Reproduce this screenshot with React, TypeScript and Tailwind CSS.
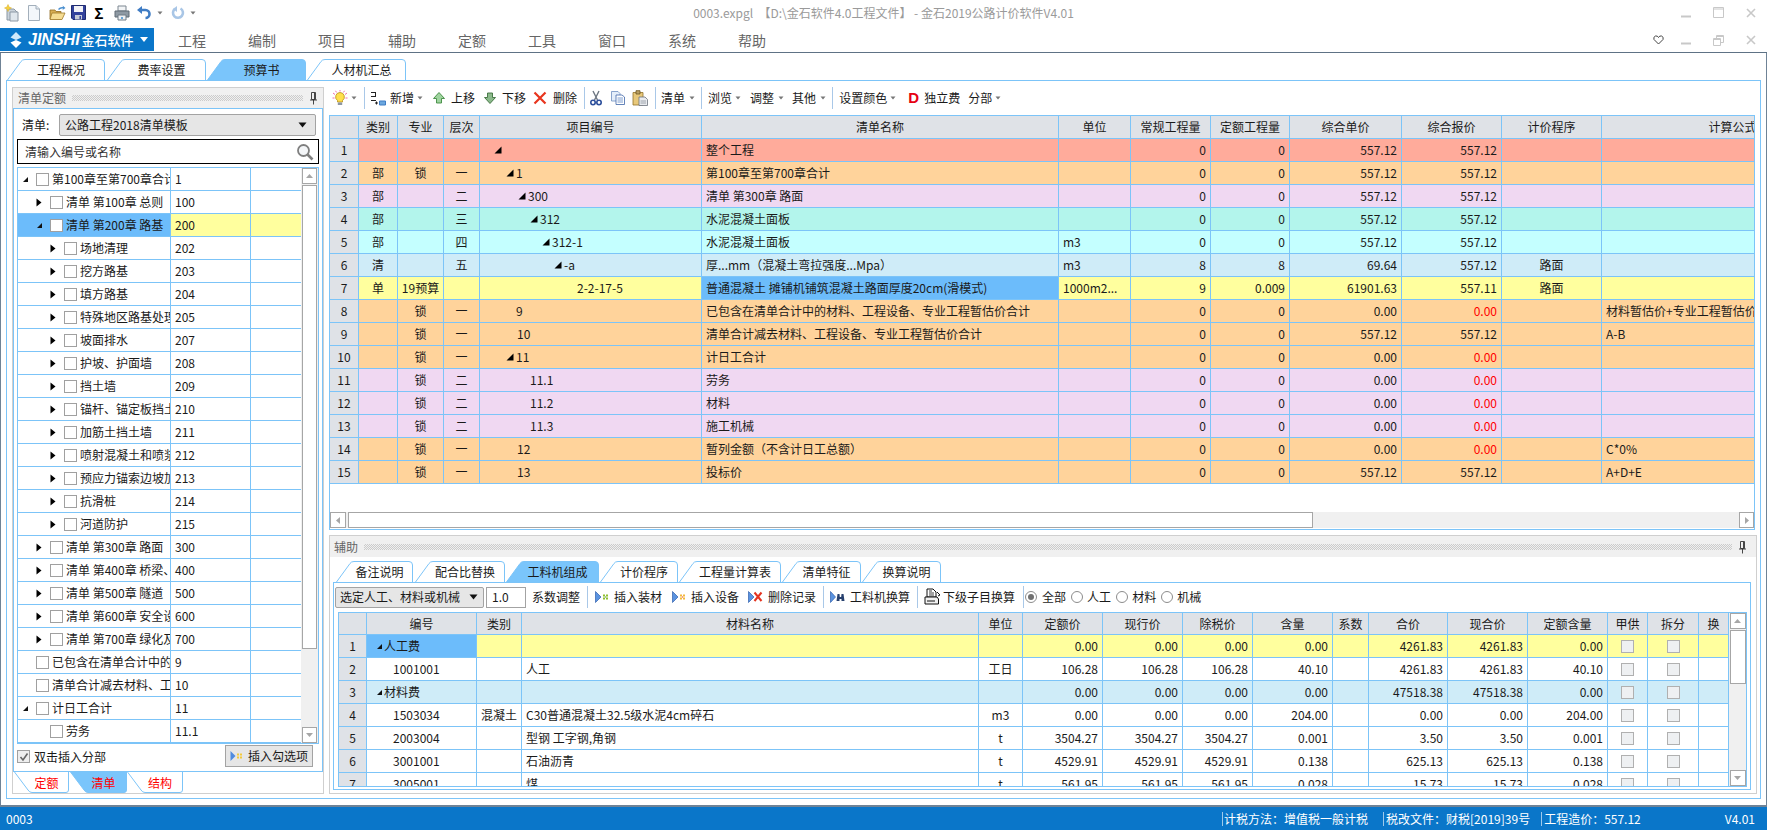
import React from "react";

const LINE = "border-[#7cc4f8]";
const mainCols = "grid grid-cols-[29px_39px_46px_36px_222px_357px_72px_80px_79px_112px_100px_100px_262px] w-[1534px]";
const subCols = "grid grid-cols-[28px_110px_45px_457px_44px_80px_80px_70px_80px_36px_79px_80px_80px_40px_51px_30px] w-[1390px]";
const treeCols = "grid grid-cols-[153px_80px_50px] w-[283px]";

const BG = {
  red: "bg-[#ffab9b]",
  orange: "bg-[#ffd39b]",
  purple: "bg-[#f0d8f2]",
  teal: "bg-[#b3f5ec]",
  cyan: "bg-[#c4ffff]",
  blue: "bg-[#cfecf8]",
  yellow: "bg-[#ffff9e]",
  white: "bg-white",
};

function Cell({ children, align = "c", className = "" }: { children?: React.ReactNode; align?: "c" | "l" | "r"; className?: string }) {
  const a = align === "c" ? "justify-center" : align === "r" ? "justify-end pr-1" : "justify-start pl-1";
  return <div className={`flex items-center overflow-hidden whitespace-nowrap border-r ${LINE} min-w-0 ${a} ${className}`}>{children}</div>;
}

function ExpTri({ className = "" }: { className?: string }) {
  return (
    <svg width="8" height="8" viewBox="0 0 8 8" className={`shrink-0 ${className}`}>
      <path d="M7.5 0.5V7.5H0.5Z" fill="#000" />
    </svg>
  );
}
function SmallTri() {
  return (
    <svg width="8" height="8" viewBox="0 0 8 8" className="shrink-0">
      <path d="M7 2V7H2Z" fill="#111" />
    </svg>
  );
}
function ColTri() {
  return (
    <svg width="8" height="9" viewBox="0 0 8 9" className="shrink-0">
      <path d="M1.5 0.5L6.5 4.5L1.5 8.5Z" fill="#000" />
    </svg>
  );
}
function Dd() {
  return (
    <svg width="6" height="4" viewBox="0 0 6 4" className="shrink-0">
      <path d="M0.5 0.5H5.5L3 3.5Z" fill="#777" />
    </svg>
  );
}
function Sep({ className = "" }: { className?: string }) {
  return <div className={`w-px h-[22px] bg-[#a9c8e8] shrink-0 ${className}`} />;
}
function Caret({ className = "" }: { className?: string }) {
  return (
    <svg width="9" height="6" viewBox="0 0 9 6" className={`shrink-0 ${className}`}>
      <path d="M0.5 0.5H8.5L4.5 5.5Z" fill="#111" />
    </svg>
  );
}

function Tab({ w, label, active, className, h = 21 }: { w: number; label: string; active?: boolean; className: string; h?: number }) {
  return (
    <div className={`relative shrink-0 flex items-center justify-center pl-[10px] ${className}`}>
      <svg width={w} height={h} viewBox={`0 0 ${w} ${h}`} className="absolute left-0 top-0">
        <path
          d={`M0.5 ${h} L14 2.5 Q15.2 0.5 18 0.5 L${w - 4} 0.5 Q${w - 0.5} 0.5 ${w - 0.5} 4 L${w - 0.5} ${h}`}
          fill={active ? "#7ac5fb" : "#fff"}
          stroke="#7cc4f8"
        />
      </svg>
      <span className="relative text-[12px] leading-[20px] text-[#1a1a1a]">{label}</span>
    </div>
  );
}

function BottomTab({ w, label, active, className }: { w: number; label: string; active?: boolean; className: string }) {
  const h = 21;
  return (
    <div className={`relative shrink-0 flex items-center justify-center ${className}`}>
      <svg width={w} height={h} viewBox={`0 0 ${w} ${h}`} className="absolute left-0 top-0">
        <path
          d={`M0.5 0 L14 ${h - 3} Q15.5 ${h - 0.5} 18 ${h - 0.5} L${w - 3} ${h - 0.5} Q${w - 0.5} ${h - 0.5} ${w - 0.5} ${h - 3} L${w - 0.5} 0`}
          fill={active ? "#7ac5fb" : "#fff"}
          stroke="#7cc4f8"
        />
      </svg>
      <span className="relative text-[12px] leading-[20px] text-[#ff0000] pl-[10px]">{label}</span>
    </div>
  );
}

function Pin() {
  return (
    <svg width="9" height="14" viewBox="0 0 9 14" className="shrink-0">
      <path d="M2.5 1.5H6.5V8.5H2.5Z M1 9H8 M4.5 9V13.5 M5.5 2V8" fill="none" stroke="#333" strokeWidth="0.9" />
    </svg>
  );
}
function DotBand() {
  return <div className="flex-1 h-[6px] bg-[repeating-conic-gradient(#cbcbcb_0_25%,transparent_0_50%)] bg-[length:2px_2px]" />;
}

function Box({ className = "" }: { className?: string }) {
  return <div className={`w-[13px] h-[13px] border border-[#a0a0a0] bg-white shrink-0 ${className}`} />;
}

function ScrollBtn({ dir, className = "" }: { dir: "up" | "down" | "left" | "right"; className?: string }) {
  const d = { up: "M4.5 2L8 6H1Z", down: "M1 2H8L4.5 6Z", left: "M6 1V8L2 4.5Z", right: "M3 1V8L7 4.5Z" }[dir];
  return (
    <div className={`flex items-center justify-center bg-white border border-[#a6a6a6] shrink-0 ${className}`}>
      <svg width="9" height="9" viewBox="0 0 9 9">
        <path d={d} fill="#a6a6a6" />
      </svg>
    </div>
  );
}

/* ----- icons ----- */
function IconNewStar() {
  return (
    <svg width="16" height="18" viewBox="0 0 16 18" className="shrink-0">
      <path d="M3 5H10L13 8V16H3Z" fill="#c9d2da" stroke="#8c98a4" />
      <path d="M6 8H14V17H6Z" fill="#dfe6ec" stroke="#8c98a4" />
      <path d="M4 0.5L5 3L7.5 4L5 5L4 7.5L3 5L0.5 4L3 3Z" fill="#f7d23c" stroke="#d9a81a" strokeWidth="0.5" />
    </svg>
  );
}
function IconDoc() {
  return (
    <svg width="16" height="18" viewBox="0 0 16 18" className="shrink-0">
      <path d="M2.5 1.5H10L13.5 5V16.5H2.5Z" fill="#f3f7fb" stroke="#a3afbb" />
      <path d="M10 1.5V5H13.5" fill="#dfe6ee" stroke="#a3afbb" />
    </svg>
  );
}
function IconFolder() {
  return (
    <svg width="17" height="16" viewBox="0 0 17 16" className="shrink-0">
      <path d="M1 5H6L7 6.5H12V14H1Z" fill="#d8ad52" stroke="#8f6b22" strokeWidth="0.8" />
      <path d="M3 8H16L13 14.5H1Z" fill="#f5dc92" stroke="#a07a2a" strokeWidth="0.8" />
      <path d="M9 4Q11 1.5 14 2L13.5 0.5L16.5 3L13.5 5L14 3.5Q11.5 3 10 5Z" fill="#4a8fcf" />
    </svg>
  );
}
function IconSave() {
  return (
    <svg width="15" height="15" viewBox="0 0 15 15" className="shrink-0">
      <path d="M0.5 0.5H14.5V14.5H2L0.5 13Z" fill="#33429c" stroke="#1e2a70" />
      <path d="M3 1H12V7H3Z" fill="#f2f2f6" />
      <path d="M4 10H11V14.5H4Z" fill="#c8ccd6" />
      <path d="M8.5 11H10V14H8.5Z" fill="#33429c" />
    </svg>
  );
}
function IconPrinter() {
  return (
    <svg width="16" height="16" viewBox="0 0 16 16" className="shrink-0">
      <path d="M4 1H12V6H4Z" fill="#f2f4f6" stroke="#7d8791" />
      <path d="M1 6H15V12H1Z" fill="#8e99a3" stroke="#5f6a74" />
      <path d="M4 10H12V15H4Z" fill="#eef1f4" stroke="#6f7a84" />
      <path d="M7 12H9V14H7Z" fill="#6aa7d8" />
    </svg>
  );
}
function IconUndo({ light }: { light?: boolean }) {
  const c = light ? "#a9c6e6" : "#3f7cc4";
  return light ? (
    <svg width="16" height="16" viewBox="0 0 16 16" className="shrink-0">
      <path d="M10.5 3.5A5 5 0 1 1 5 3.8" fill="none" stroke={c} strokeWidth="2.6" />
      <path d="M7 1V7L3 4Z" fill={c} />
    </svg>
  ) : (
    <svg width="16" height="16" viewBox="0 0 16 16" className="shrink-0">
      <path d="M4 5H9.5A4 4 0 0 1 9.5 13" fill="none" stroke={c} strokeWidth="2.6" />
      <path d="M6 1V9L1 5Z" fill={c} />
    </svg>
  );
}
function IconBulb() {
  return (
    <svg width="16" height="17" viewBox="0 0 16 17" className="shrink-0">
      <path d="M1 3L3 4.5M15 3L13 4.5M0.5 8H2.5M15.5 8H13.5M8 0V1.5M3.5 0.8L4.5 2.4M12.5 0.8L11.5 2.4" stroke="#f06bb0" strokeWidth="1" />
      <path d="M8 2.5A4.4 4.4 0 0 1 10.5 10.5V12H5.5V10.5A4.4 4.4 0 0 1 8 2.5Z" fill="#ffe04d" stroke="#b88d1c" strokeWidth="0.8" />
      <path d="M5.8 12.5H10.2V15H5.8Z" fill="#8d97a3" />
    </svg>
  );
}
function IconNew() {
  return (
    <svg width="16" height="16" viewBox="0 0 16 16" className="shrink-0">
      <path d="M1 2.5H6M5.5 2.5V6.5M1 6.5H6M1 10.5H6" stroke="#222" fill="none" />
      <path d="M5 13H8M6.5 11.5V14.5" stroke="#222" />
      <path d="M9.5 11H15.5V15H9.5Z" fill="#6ba7de" stroke="#3f7cc4" />
    </svg>
  );
}
function IconUp({ dark }: { dark?: boolean }) {
  return (
    <svg width="12" height="12" viewBox="0 0 12 12" className="shrink-0">
      {dark ? (
        <path d="M3.5 1H8.5V5.5H11.5L6 11.5L0.5 5.5H3.5Z" fill="#8bb98b" stroke="#3c6f3c" strokeWidth="0.9" />
      ) : (
        <path d="M6 0.5L11.5 6.5H8.5V11H3.5V6.5H0.5Z" fill="#9fd49f" stroke="#3f8a3f" strokeWidth="0.9" />
      )}
    </svg>
  );
}
function IconX() {
  return (
    <svg width="14" height="14" viewBox="0 0 14 14" className="shrink-0">
      <path d="M1.5 1.5L12.5 12.5M12.5 1.5L1.5 12.5" stroke="#e8351e" strokeWidth="2.2" />
    </svg>
  );
}
function IconScissors() {
  return (
    <svg width="14" height="16" viewBox="0 0 14 16" className="shrink-0">
      <path d="M4 1L8.5 10M10 1L5.5 10" stroke="#6d7682" strokeWidth="1.4" />
      <circle cx="4" cy="12.5" r="2.2" fill="none" stroke="#2d4f9c" strokeWidth="1.6" />
      <circle cx="10" cy="12.5" r="2.2" fill="none" stroke="#2d4f9c" strokeWidth="1.6" />
    </svg>
  );
}
function IconCopy() {
  return (
    <svg width="14" height="14" viewBox="0 0 14 14" className="shrink-0">
      <path d="M0.5 0.5H7L9 2.5V10H0.5Z" fill="#e4eefa" stroke="#6f8fc0" strokeWidth="0.8" />
      <path d="M5 4H11L13.5 6V13.5H5Z" fill="#fff" stroke="#3f66a8" strokeWidth="0.8" />
      <path d="M6.5 7H12M6.5 9H12M6.5 11H12" stroke="#5d86c4" strokeWidth="0.8" />
    </svg>
  );
}
function IconPaste() {
  return (
    <svg width="16" height="16" viewBox="0 0 16 16" className="shrink-0">
      <path d="M1 2.5H11V15H1Z" fill="#e8c87a" stroke="#93722a" strokeWidth="0.8" />
      <path d="M4 0.7H8V4H4Z" fill="#bba267" stroke="#6b5420" strokeWidth="0.8" />
      <path d="M7 7H13L15.5 9.5V15.5H7Z" fill="#e9ebef" stroke="#6b727c" strokeWidth="0.8" />
      <path d="M8.5 11H14M8.5 13H14" stroke="#8a929c" strokeWidth="0.8" />
    </svg>
  );
}
function IconInsert({ c1, c2 }: { c1: string; c2: string }) {
  return (
    <svg width="14" height="14" viewBox="0 0 14 14" className="shrink-0">
      <path d="M0.5 1.5L6 7L0.5 12.5Z" fill="#5a93e0" stroke="#2f5fae" strokeWidth="0.7" />
      <path d="M8 4.5H10V6.5H8ZM11 4.5H13V6.5H11ZM8 7.5H10V9.5H8ZM11 7.5H13V9.5H11Z" fill={c1} />
      <path d="M10 6.5H11V7.5H10Z" fill={c2} />
    </svg>
  );
}
function IconDel() {
  return (
    <svg width="15" height="14" viewBox="0 0 15 14" className="shrink-0">
      <path d="M0.5 1.5L6 7L0.5 12.5Z" fill="#5a93e0" stroke="#2f5fae" strokeWidth="0.7" />
      <path d="M6.5 2.5L13.5 11M13.5 2.5L6.5 11" stroke="#e5331f" strokeWidth="2" />
    </svg>
  );
}
function IconBinoc() {
  return (
    <svg width="15" height="14" viewBox="0 0 15 14" className="shrink-0">
      <path d="M0.5 1.5L5.5 7L0.5 12.5Z" fill="#5a93e0" stroke="#2f5fae" strokeWidth="0.7" />
      <path d="M7.5 4H9.5L9.8 7H11.2L11.5 4H13.5L14.5 11H11.5V9H9.5V11H6.5Z" fill="#27406e" />
    </svg>
  );
}
function IconSub() {
  return (
    <svg width="17" height="18" viewBox="0 0 17 18" className="shrink-0">
      <path d="M3 1H9L12 4V9H3Z" fill="#fff" stroke="#111" />
      <path d="M5 3H8M5 5H10M5 7H10" stroke="#111" strokeWidth="0.8" />
      <path d="M1 9H13L14.5 11V16H1Z" fill="#f1f1f1" stroke="#111" />
      <path d="M3 13H11" stroke="#111" />
      <path d="M13 4L16 7L14 8" fill="none" stroke="#111" />
    </svg>
  );
}
function Radio({ on, className = "" }: { on?: boolean; className?: string }) {
  return (
    <div className={`w-[12px] h-[12px] rounded-full border border-[#8c8c8c] bg-white flex items-center justify-center shrink-0 ${className}`}>
      {on && <div className="w-[6px] h-[6px] rounded-full bg-[#707070]" />}
    </div>
  );
}
function WinBtns({ restore }: { restore?: boolean }) {
  return (
    <>
      <svg width="10" height="10" viewBox="0 0 10 10" className="shrink-0">
        <path d="M0 8.5H10" stroke="#c8c8c8" strokeWidth="2" />
      </svg>
      <svg width="11" height="11" viewBox="0 0 11 11" className="shrink-0 ml-[22px]">
        {restore ? (
          <path d="M0.5 3.5H7.5V10.5H0.5Z M3.5 3.5V0.5H10.5V7.5H7.5 M0.5 4.5H7.5 M3.5 1.5H10.5" fill="none" stroke="#c8c8c8" />
        ) : (
          <path d="M0.5 0.5H10.5V10.5H0.5Z M0.5 2H10.5" fill="none" stroke="#c8c8c8" strokeWidth="1" />
        )}
      </svg>
      <svg width="10" height="10" viewBox="0 0 10 10" className="shrink-0 ml-[22px]">
        <path d="M1 1L9 9M9 1L1 9" stroke="#c8c8c8" strokeWidth="1.6" />
      </svg>
    </>
  );
}

/* ----- data ----- */
type MainRow = {
  bg: string;
  t?: string;
  m?: string;
  l?: string;
  pad: string;
  tri?: boolean;
  code?: string;
  name: string;
  sel?: boolean;
  unit?: string;
  q1: string;
  q2: string;
  up: string;
  total: string;
  red?: boolean;
  prog?: string;
  formula?: string;
};

const mainRows: MainRow[] = [
  { bg: BG.red, pad: "!pl-[14px]", tri: true, name: "整个工程", q1: "0", q2: "0", up: "557.12", total: "557.12" },
  { bg: BG.orange, t: "部", m: "锁", l: "一", pad: "!pl-[26px]", tri: true, code: "1", name: "第100章至第700章合计", q1: "0", q2: "0", up: "557.12", total: "557.12" },
  { bg: BG.purple, t: "部", l: "二", pad: "!pl-[38px]", tri: true, code: "300", name: "清单 第300章 路面", q1: "0", q2: "0", up: "557.12", total: "557.12" },
  { bg: BG.teal, t: "部", l: "三", pad: "!pl-[50px]", tri: true, code: "312", name: "水泥混凝土面板", q1: "0", q2: "0", up: "557.12", total: "557.12" },
  { bg: BG.cyan, t: "部", l: "四", pad: "!pl-[62px]", tri: true, code: "312-1", name: "水泥混凝土面板", unit: "m3", q1: "0", q2: "0", up: "557.12", total: "557.12" },
  { bg: BG.blue, t: "清", l: "五", pad: "!pl-[74px]", tri: true, code: "-a", name: "厚...mm（混凝土弯拉强度...Mpa）", unit: "m3", q1: "8", q2: "8", up: "69.64", total: "557.12", prog: "路面" },
  { bg: BG.yellow, t: "单", m: "19预算", pad: "!pl-[97px]", code: "2-2-17-5", name: "普通混凝土 摊铺机铺筑混凝土路面厚度20cm(滑模式)", sel: true, unit: "1000m2...", q1: "9", q2: "0.009", up: "61901.63", total: "557.11", prog: "路面" },
  { bg: BG.orange, m: "锁", l: "一", pad: "!pl-[36px]", code: "9", name: "已包含在清单合计中的材料、工程设备、专业工程暂估价合计", q1: "0", q2: "0", up: "0.00", total: "0.00", red: true, formula: "材料暂估价+专业工程暂估价合计" },
  { bg: BG.orange, m: "锁", l: "一", pad: "!pl-[37px]", code: "10", name: "清单合计减去材料、工程设备、专业工程暂估价合计", q1: "0", q2: "0", up: "557.12", total: "557.12", formula: "A-B" },
  { bg: BG.orange, m: "锁", l: "一", pad: "!pl-[26px]", tri: true, code: "11", name: "计日工合计", q1: "0", q2: "0", up: "0.00", total: "0.00", red: true },
  { bg: BG.purple, m: "锁", l: "二", pad: "!pl-[50px]", code: "11.1", name: "劳务", q1: "0", q2: "0", up: "0.00", total: "0.00", red: true },
  { bg: BG.purple, m: "锁", l: "二", pad: "!pl-[50px]", code: "11.2", name: "材料", q1: "0", q2: "0", up: "0.00", total: "0.00", red: true },
  { bg: BG.purple, m: "锁", l: "二", pad: "!pl-[50px]", code: "11.3", name: "施工机械", q1: "0", q2: "0", up: "0.00", total: "0.00", red: true },
  { bg: BG.orange, m: "锁", l: "一", pad: "!pl-[37px]", code: "12", name: "暂列金额（不含计日工总额）", q1: "0", q2: "0", up: "0.00", total: "0.00", red: true, formula: "C*0%" },
  { bg: BG.orange, m: "锁", l: "一", pad: "!pl-[37px]", code: "13", name: "投标价", q1: "0", q2: "0", up: "557.12", total: "557.12", formula: "A+D+E" },
];

const mainHead = ["", "类别", "专业", "层次", "项目编号", "清单名称", "单位", "常规工程量", "定额工程量", "综合单价", "综合报价", "计价程序", "计算公式"];
const subHead = ["", "编号", "类别", "材料名称", "单位", "定额价", "现行价", "除税价", "含量", "系数", "合价", "现合价", "定额含量", "甲供", "拆分", "换"];

type SubRow = { bg: string; group?: boolean; code: string; kind?: string; name?: string; unit?: string; v: string[] };
const subRows: SubRow[] = [
  { bg: BG.yellow, group: true, code: "人工费", v: ["0.00", "0.00", "0.00", "0.00", "4261.83", "4261.83", "0.00"] },
  { bg: BG.white, code: "1001001", name: "人工", unit: "工日", v: ["106.28", "106.28", "106.28", "40.10", "4261.83", "4261.83", "40.10"] },
  { bg: BG.blue, group: true, code: "材料费", v: ["0.00", "0.00", "0.00", "0.00", "47518.38", "47518.38", "0.00"] },
  { bg: BG.white, code: "1503034", kind: "混凝土", name: "C30普通混凝土32.5级水泥4cm碎石", unit: "m3", v: ["0.00", "0.00", "0.00", "204.00", "0.00", "0.00", "204.00"] },
  { bg: BG.white, code: "2003004", name: "型钢 工字钢,角钢", unit: "t", v: ["3504.27", "3504.27", "3504.27", "0.001", "3.50", "3.50", "0.001"] },
  { bg: BG.white, code: "3001001", name: "石油沥青", unit: "t", v: ["4529.91", "4529.91", "4529.91", "0.138", "625.13", "625.13", "0.138"] },
  { bg: BG.white, code: "3005001", name: "煤", unit: "t", v: ["561.95", "561.95", "561.95", "0.028", "15.73", "15.73", "0.028"] },
];

type TreeRow = { lv: 0 | 1 | 2; arrow?: "exp" | "col"; name: string; code: string; sel?: boolean };
const treeRows: TreeRow[] = [
  { lv: 0, arrow: "exp", name: "第100章至第700章合计", code: "1" },
  { lv: 1, arrow: "col", name: "清单 第100章 总则", code: "100" },
  { lv: 1, arrow: "exp", name: "清单 第200章 路基", code: "200", sel: true },
  { lv: 2, arrow: "col", name: "场地清理", code: "202" },
  { lv: 2, arrow: "col", name: "挖方路基", code: "203" },
  { lv: 2, arrow: "col", name: "填方路基", code: "204" },
  { lv: 2, arrow: "col", name: "特殊地区路基处理", code: "205" },
  { lv: 2, arrow: "col", name: "坡面排水", code: "207" },
  { lv: 2, arrow: "col", name: "护坡、护面墙", code: "208" },
  { lv: 2, arrow: "col", name: "挡土墙", code: "209" },
  { lv: 2, arrow: "col", name: "锚杆、锚定板挡土墙", code: "210" },
  { lv: 2, arrow: "col", name: "加筋土挡土墙", code: "211" },
  { lv: 2, arrow: "col", name: "喷射混凝土和喷浆", code: "212" },
  { lv: 2, arrow: "col", name: "预应力锚索边坡加固", code: "213" },
  { lv: 2, arrow: "col", name: "抗滑桩", code: "214" },
  { lv: 2, arrow: "col", name: "河道防护", code: "215" },
  { lv: 1, arrow: "col", name: "清单 第300章 路面", code: "300" },
  { lv: 1, arrow: "col", name: "清单 第400章 桥梁、涵洞", code: "400" },
  { lv: 1, arrow: "col", name: "清单 第500章 隧道", code: "500" },
  { lv: 1, arrow: "col", name: "清单 第600章 安全设施", code: "600" },
  { lv: 1, arrow: "col", name: "清单 第700章 绿化及环境", code: "700" },
  { lv: 0, name: "已包含在清单合计中的材料", code: "9" },
  { lv: 0, name: "清单合计减去材料、工程设备", code: "10" },
  { lv: 0, arrow: "exp", name: "计日工合计", code: "11" },
  { lv: 1, name: "劳务", code: "11.1" },
];
const treePad = ["pl-[3px]", "pl-[17px]", "pl-[31px]"];

function LeftPanel() {
  return (
    <div className="w-[312px] h-[707px] border border-[#cfcfcf] shrink-0 flex flex-col">
      <div className="h-[20px] bg-[#f0f0f0] flex items-center pl-[5px] pr-[5px] gap-[6px] text-[12px] text-[#666]">
        <span className="leading-[20px]">清单定额</span>
        <DotBand />
        <Pin />
      </div>
      <div className={`h-[664px] border ${LINE} flex flex-col`}>
        <div className="flex items-center h-[22px] mt-[5px] pl-[8px]">
          <span className="w-[37px] text-[12px] leading-[20px]">清单:</span>
          <div className="w-[257px] h-[22px] border border-[#a3a3a3] rounded-[2px] bg-[#e6e6e6] flex items-center pl-[5px] pr-[8px] justify-between">
            <span className="text-[12px] leading-[20px]">公路工程2018清单模板</span>
            <Caret />
          </div>
        </div>
        <div className="ml-[3px] mt-[3px] w-[302px] h-[25px] border border-black flex items-center pl-[7px] pr-[4px] justify-between">
          <span className="text-[12px] leading-[20px] text-[#333]">清输入编号或名称</span>
          <svg width="18" height="18" viewBox="0 0 18 18" className="shrink-0">
            <circle cx="7.5" cy="7.5" r="5.5" fill="#f4f6f8" stroke="#7f7f7f" strokeWidth="1.8" />
            <path d="M11.5 11.5L16.5 16.5" stroke="#7f7f7f" strokeWidth="2.6" />
          </svg>
        </div>
        <div className={`ml-[3px] mt-[3px] w-[302px] h-[577px] border ${LINE} flex overflow-hidden`}>
          <div className="w-[283px] shrink-0">
            {treeRows.map((r) => (
              <div key={r.code} className={`${treeCols} h-[23px] border-b ${LINE} text-[12px] leading-[20px]`}>
                <div className={`flex items-center overflow-hidden whitespace-nowrap border-r ${LINE} ${treePad[r.lv]} ${r.sel ? "bg-[#6cbcfb]" : ""}`}>
                  <div className="w-[8px] flex justify-center shrink-0">{r.arrow === "exp" ? <SmallTri /> : r.arrow === "col" ? <ColTri /> : null}</div>
                  <Box className="ml-[7px]" />
                  <span className="ml-[3px]">{r.name}</span>
                </div>
                <div className={`flex items-center pl-[4px] border-r ${LINE} ${r.sel ? "bg-[#ffff9e]" : ""}`}>{r.code}</div>
                <div className={r.sel ? "bg-[#ffff9e]" : ""} />
              </div>
            ))}
          </div>
          <div className="w-[17px] bg-[#f0f0f0] flex flex-col items-center shrink-0">
            <ScrollBtn dir="up" className="w-[15px] h-[16px]" />
            <div className="w-[15px] h-[464px] mt-px bg-white border border-[#a6a6a6]" />
            <div className="flex-1" />
            <ScrollBtn dir="down" className="w-[15px] h-[16px]" />
          </div>
        </div>
        <div className="flex-1 flex items-start pl-[3px] pt-[1px]">
          <div className="mt-[5px] w-[13px] h-[13px] border border-[#a0a0a0] bg-[#eeeeee] flex items-center justify-center shrink-0">
            <svg width="10" height="10" viewBox="0 0 10 10">
              <path d="M1.5 5L4 8L8.5 1.5" fill="none" stroke="#666" strokeWidth="1.6" />
            </svg>
          </div>
          <span className="ml-[4px] mt-[2px] text-[12px] leading-[20px]">双击插入分部</span>
          <div className="ml-[119px] w-[88px] h-[22px] border border-[#a3a3a3] bg-[#e6e6e6] flex items-center pl-[4px]">
            <svg width="14" height="12" viewBox="0 0 14 12" className="shrink-0">
              <path d="M0.5 1L5.5 6L0.5 11Z" fill="#4f8be0" />
              <path d="M7 3.5H9V5.5H7ZM10 3.5H12V5.5H10ZM7 6.5H9V8.5H7ZM10 6.5H12V8.5H10Z" fill="#f3c93a" />
            </svg>
            <span className="ml-[4px] text-[12px] leading-[20px]">插入勾选项</span>
          </div>
        </div>
      </div>
      <div className="h-[21px] flex pl-px">
        <BottomTab w={55} label="定额" className="w-[55px]" />
        <BottomTab w={57} label="清单" active className="w-[57px] ml-px" />
        <BottomTab w={56} label="结构" className="w-[56px]" />
      </div>
    </div>
  );
}

function MainToolbar() {
  const T = ({ c, children }: { c: string; children: React.ReactNode }) => (
    <span className={`shrink-0 whitespace-nowrap text-[12px] leading-[20px] text-[#1a1a1a] ${c}`}>{children}</span>
  );
  return (
    <div className="h-[22px] mb-[6px] flex items-center">
      <div className="ml-[3px]"><IconBulb /></div>
      <div className="ml-[3px]"><Dd /></div>
      <Sep className="ml-[7px]" />
      <div className="ml-[5px]"><IconNew /></div>
      <T c="ml-[4px]">新增</T>
      <div className="ml-[3px]"><Dd /></div>
      <div className="ml-[10px]"><IconUp /></div>
      <T c="ml-[6px]">上移</T>
      <div className="ml-[9px]"><IconUp dark /></div>
      <T c="ml-[6px]">下移</T>
      <div className="ml-[7px]"><IconX /></div>
      <T c="ml-[6px]">删除</T>
      <Sep className="ml-[7px]" />
      <div className="ml-[4px]"><IconScissors /></div>
      <div className="ml-[8px]"><IconCopy /></div>
      <div className="ml-[7px]"><IconPaste /></div>
      <Sep className="ml-[7px]" />
      <T c="ml-[5px]">清单</T>
      <div className="ml-[4px]"><Dd /></div>
      <Sep className="ml-[6px]" />
      <T c="ml-[6px]">浏览</T>
      <div className="ml-[3px]"><Dd /></div>
      <T c="ml-[9px]">调整</T>
      <div className="ml-[4px]"><Dd /></div>
      <T c="ml-[8px]">其他</T>
      <div className="ml-[4px]"><Dd /></div>
      <Sep className="ml-[6px]" />
      <T c="ml-[6px]">设置颜色</T>
      <div className="ml-[3px]"><Dd /></div>
      <span className="ml-[12px] w-[10px] text-[15px] font-bold leading-[20px] text-[#e60012] font-['Liberation_Sans',sans-serif]">D</span>
      <T c="ml-[6px]">独立费</T>
      <T c="ml-[8px]">分部</T>
      <div className="ml-[3px]"><Dd /></div>
    </div>
  );
}

function MainGrid() {
  return (
    <div className={`w-[1426px] h-[415px] border ${LINE} flex flex-col`}>
      <div className="flex-1 overflow-hidden text-[12px] leading-[20px] text-[#1a1a1a]">
        <div className={`${mainCols} h-[23px] bg-[#dfe2e7] border-b ${LINE}`}>
          {mainHead.map((h, i) => (
            <Cell key={i}>{h}</Cell>
          ))}
        </div>
        {mainRows.map((r, i) => (
          <div key={i} className={`${mainCols} h-[23px] border-b ${LINE} ${r.bg}`}>
            <Cell className="bg-[#dfe2e7]">{i + 1}</Cell>
            <Cell>{r.t}</Cell>
            <Cell>{r.m}</Cell>
            <Cell>{r.l}</Cell>
            <Cell align="l" className={r.pad}>
              {r.tri && <ExpTri />}
              {r.code && <span className={r.tri ? "ml-[2px]" : ""}>{r.code}</span>}
            </Cell>
            <Cell align="l" className={r.sel ? "bg-[#6cbcfb]" : ""}>{r.name}</Cell>
            <Cell align="l">{r.unit}</Cell>
            <Cell align="r">{r.q1}</Cell>
            <Cell align="r">{r.q2}</Cell>
            <Cell align="r">{r.up}</Cell>
            <Cell align="r" className={r.red ? "text-[#ff0000]" : ""}>{r.total}</Cell>
            <Cell>{r.prog}</Cell>
            <Cell align="l">{r.formula}</Cell>
          </div>
        ))}
      </div>
      <div className="h-[16px] mb-px bg-[#f0f0f0] flex shrink-0">
        <ScrollBtn dir="left" className="w-[16px] h-[16px]" />
        <div className="ml-[2px] w-[965px] h-[16px] bg-white border border-[#a6a6a6]" />
        <div className="flex-1" />
        <ScrollBtn dir="right" className="w-[15px] h-[16px]" />
      </div>
    </div>
  );
}

function SubToolbar() {
  const T = ({ c, children }: { c: string; children: React.ReactNode }) => (
    <span className={`shrink-0 whitespace-nowrap text-[12px] leading-[20px] text-[#1a1a1a] ${c}`}>{children}</span>
  );
  return (
    <div className="h-[29px] flex items-center pb-[1px]">
      <div className="ml-px w-[149px] h-[21px] border border-[#a3a3a3] rounded-[2px] bg-[#e6e6e6] flex items-center justify-between pl-[4px] pr-[5px]">
        <span className="text-[12px] leading-[20px] whitespace-nowrap">选定人工、材料或机械</span>
        <Caret />
      </div>
      <div className="ml-[2px] w-[40px] h-[21px] border border-[#a3a3a3] flex items-center pl-[5px] text-[12px]">1.0</div>
      <T c="ml-[6px]">系数调整</T>
      <Sep className="ml-[7px]" />
      <div className="ml-[7px]"><IconInsert c1="#8fbf2f" c2="#3f8a3f" /></div>
      <T c="ml-[5px]">插入装材</T>
      <div className="ml-[10px]"><IconInsert c1="#f3b73a" c2="#e5331f" /></div>
      <T c="ml-[5px]">插入设备</T>
      <div className="ml-[9px]"><IconDel /></div>
      <T c="ml-[5px]">删除记录</T>
      <Sep className="ml-[7px]" />
      <div className="ml-[6px]"><IconBinoc /></div>
      <T c="ml-[5px]">工料机换算</T>
      <Sep className="ml-[7px]" />
      <div className="ml-[6px]"><IconSub /></div>
      <T c="ml-[2px]">下级子目换算</T>
      <Sep className="ml-[8px]" />
      <Radio on className="ml-px" />
      <T c="ml-[5px]">全部</T>
      <Radio className="ml-[5px]" />
      <T c="ml-[4px]">人工</T>
      <Radio className="ml-[5px]" />
      <T c="ml-[4px]">材料</T>
      <Radio className="ml-[5px]" />
      <T c="ml-[4px]">机械</T>
    </div>
  );
}

function GrayBox() {
  return <div className="w-[13px] h-[13px] border border-[#b0b0b0] bg-[#eef0f2]" />;
}

function SubGrid() {
  return (
    <div className={`ml-[4px] w-[1409px] h-[175px] border ${LINE} flex overflow-hidden`}>
      <div className="w-[1390px] shrink-0 overflow-hidden text-[12px] leading-[20px] text-[#1a1a1a]">
        <div className={`${subCols} h-[22px] bg-[#dfe2e7] border-b ${LINE}`}>
          {subHead.map((h, i) => (
            <Cell key={i}>{h}</Cell>
          ))}
        </div>
        {subRows.map((r, i) => (
          <div key={i} className={`${subCols} h-[23px] border-b ${LINE} ${r.bg}`}>
            <Cell className="bg-[#dfe2e7]">{i + 1}</Cell>
            {r.group ? (
              <Cell align="l" className={`!pl-[8px] ${i === 0 ? "bg-[#6cbcfb]" : ""}`}>
                <SmallTri />
                <span className="ml-[1px]">{r.code}</span>
              </Cell>
            ) : (
              <Cell align="l" className="!pl-[26px]">{r.code}</Cell>
            )}
            <Cell>{r.kind}</Cell>
            <Cell align="l">{r.name}</Cell>
            <Cell>{r.unit}</Cell>
            <Cell align="r">{r.v[0]}</Cell>
            <Cell align="r">{r.v[1]}</Cell>
            <Cell align="r">{r.v[2]}</Cell>
            <Cell align="r">{r.v[3]}</Cell>
            <Cell />
            <Cell align="r">{r.v[4]}</Cell>
            <Cell align="r">{r.v[5]}</Cell>
            <Cell align="r">{r.v[6]}</Cell>
            <Cell><GrayBox /></Cell>
            <Cell><GrayBox /></Cell>
            <Cell />
          </div>
        ))}
      </div>
      <div className="flex-1 bg-[#f0f0f0] flex flex-col items-center min-w-0">
        <ScrollBtn dir="up" className="w-[16px] h-[16px]" />
        <div className="w-[16px] h-[54px] mt-[1px] bg-white border border-[#a6a6a6]" />
        <div className="flex-1" />
        <ScrollBtn dir="down" className="w-[16px] h-[16px]" />
      </div>
    </div>
  );
}

function AuxPanel() {
  return (
    <div className="mt-[5px] w-[1428px] h-[259px] border border-[#cfcfcf] flex flex-col">
      <div className="h-[21px] bg-[#f0f0f0] flex items-center pl-[4px] pr-[9px] gap-[6px] text-[12px] text-[#666] shrink-0">
        <span className="leading-[20px]">辅助</span>
        <DotBand />
        <Pin />
      </div>
      <div className="mt-[4px] ml-[6px] h-[21px] flex shrink-0">
        <Tab w={77} label="备注说明" className="w-[77px]" />
        <Tab w={90} label="配合比替换" className="w-[90px] ml-[2px]" />
        <Tab w={93} label="工料机组成" active className="w-[93px] ml-px" />
        <Tab w={78} label="计价程序" className="w-[78px] ml-px" />
        <Tab w={102} label="工程量计算表" className="w-[102px] ml-px" />
        <Tab w={79} label="清单特征" className="w-[79px] ml-px" />
        <Tab w={79} label="换算说明" className="w-[79px] ml-px" />
      </div>
      <div className={`ml-[3px] w-[1418px] h-[208px] border ${LINE} flex flex-col`}>
        <SubToolbar />
        <SubGrid />
      </div>
    </div>
  );
}

export default function App() {
  return (
    <div className="w-[1767px] h-[830px] overflow-hidden bg-white flex flex-col text-[#1a1a1a] font-['Noto_Sans_CJK_SC','Noto_Sans',sans-serif]">
      <div className="h-[28px] flex items-center shrink-0">
        <div className="w-[300px] flex items-center shrink-0 pb-[3px]">
          <div className="ml-[4px]"><IconNewStar /></div>
          <div className="ml-[6px]"><IconDoc /></div>
          <div className="ml-[7px]"><IconFolder /></div>
          <div className="ml-[5px]"><IconSave /></div>
          <span className="ml-[6px] w-[14px] text-center text-[15px] font-bold leading-[20px] text-black">Σ</span>
          <div className="ml-[8px]"><IconPrinter /></div>
          <div className="ml-[6px]"><IconUndo /></div>
          <div className="ml-[5px]"><Dd /></div>
          <div className="ml-[7px]"><IconUndo light /></div>
          <div className="ml-[4px]"><Dd /></div>
        </div>
        <div className="flex-1 text-center text-[12px] leading-[20px] text-[#9a9a9a] whitespace-pre pb-[3px]">
          {"0003.expgl  【D:\\金石软件4.0工程文件】 - 金石2019公路计价软件V4.01"}
        </div>
        <div className="w-[300px] flex items-center justify-end pr-[11px] shrink-0 pb-[3px]">
          <WinBtns />
        </div>
      </div>
      <div className="h-[25px] flex items-start shrink-0 border-b border-[#5e7285]">
        <div className="w-[154px] h-[23px] bg-[#0a76c9] flex items-center text-white shrink-0">
          <svg width="12" height="16" viewBox="0 0 12 16" className="ml-[10px] shrink-0">
            <path d="M6 0L11.5 5.5L6 8L0.5 5.5Z" fill="#cfe8fb" />
            <path d="M6 8L11.5 10.5L6 16L0.5 10.5Z" fill="#ffffff" />
          </svg>
          <span className="ml-[6px] text-[16px] font-bold italic leading-[20px] font-['Liberation_Sans',sans-serif]">JINSHI</span>
          <span className="ml-[2px] text-[13px] font-medium leading-[20px] whitespace-nowrap">金石软件</span>
          <svg width="8" height="5" viewBox="0 0 8 5" className="ml-[6px] shrink-0">
            <path d="M0 0H8L4 5Z" fill="#fff" />
          </svg>
        </div>
        <nav className="ml-[24px] h-[24px] flex items-center gap-[42px] text-[14px] leading-[20px] text-[#666] whitespace-nowrap">
          <span>工程</span>
          <span>编制</span>
          <span>项目</span>
          <span>辅助</span>
          <span>定额</span>
          <span>工具</span>
          <span>窗口</span>
          <span>系统</span>
          <span>帮助</span>
        </nav>
        <div className="flex-1 h-[24px] flex items-center justify-end pr-[11px]">
          <svg width="11" height="10" viewBox="0 0 11 10" className="mr-[17px] shrink-0">
            <path d="M5.5 9L1 4.5Q0 2 2.5 1Q4.5 0.5 5.5 2.5Q6.5 0.5 8.5 1Q11 2 10 4.5Z" fill="none" stroke="#444" />
          </svg>
          <WinBtns restore />
        </div>
      </div>
      <div className="flex-1 min-h-0 border-l border-r border-b-2 border-[#6f8396] pl-[5px] pt-[6px]">
        <div className="h-[21px] flex ml-[1px]">
          <Tab w={98} label="工程概况" className="w-[98px]" />
          <Tab w={99} label="费率设置" className="w-[99px] ml-[2px]" />
          <Tab w={99} label="预算书" active className="w-[99px] ml-[1px]" />
          <Tab w={99} label="人材机汇总" className="w-[99px] ml-[1px]" />
        </div>
        <div className={`w-[1755px] h-[719px] border ${LINE} pl-[5px] pt-[6px] flex`}>
          <LeftPanel />
          <div className="ml-[5px] flex flex-col min-w-0">
            <MainToolbar />
            <MainGrid />
            <AuxPanel />
          </div>
        </div>
      </div>
      <div className="h-[23px] bg-[#0a76c9] flex items-center text-[12px] leading-[20px] text-white shrink-0">
        <span className="ml-[6px]">0003</span>
        <div className="ml-auto w-px h-[14px] bg-[#9fc9ea]" />
        <span className="ml-[1px]">计税方法：增值税一般计税</span>
        <div className="ml-[15px] w-px h-[14px] bg-[#9fc9ea]" />
        <span className="ml-[2px]">税改文件：财税[2019]39号</span>
        <div className="ml-[11px] w-px h-[14px] bg-[#9fc9ea]" />
        <span className="ml-[2px]">工程造价：557.12</span>
        <span className="ml-[84px] mr-[12px]">V4.01</span>
      </div>
    </div>
  );
}
